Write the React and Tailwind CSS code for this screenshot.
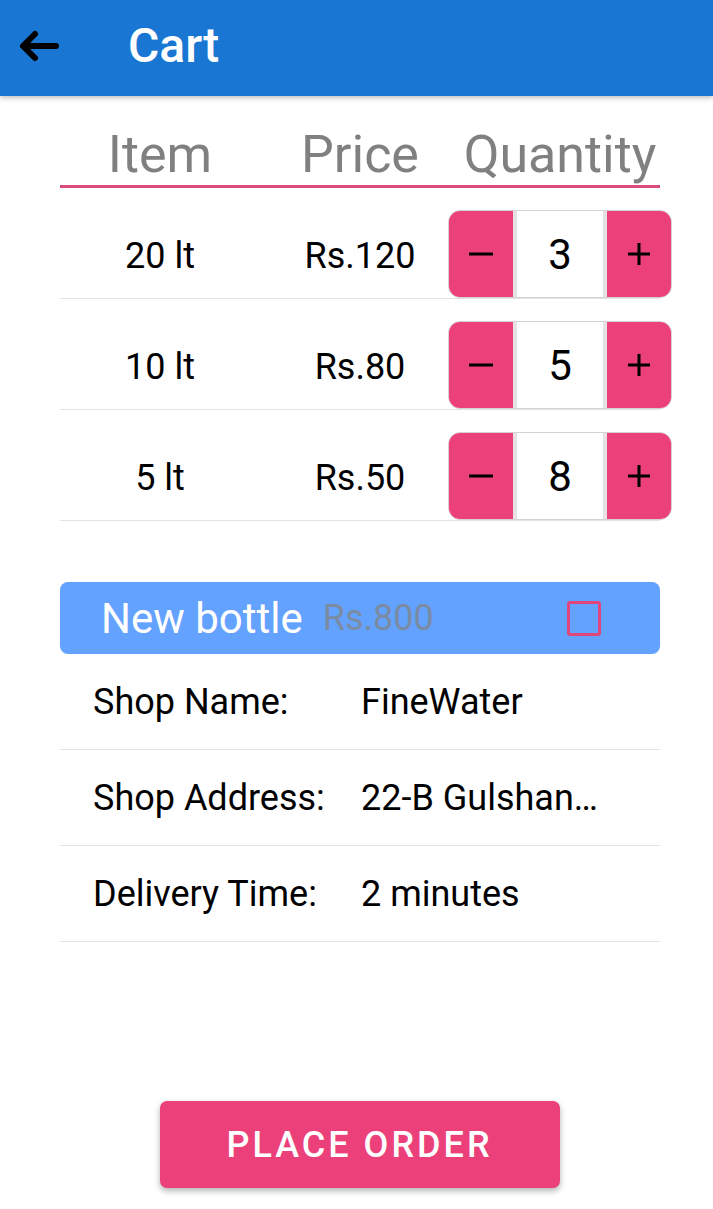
const font = { fontFamily: "Roboto, 'Noto Sans', sans-serif" };

const items = [
  { name: "20 lt", price: "Rs.120", qty: 3 },
  { name: "10 lt", price: "Rs.80", qty: 5 },
  { name: "5 lt", price: "Rs.50", qty: 8 },
];

const details = [
  { label: "Shop Name:", value: "FineWater" },
  { label: "Shop Address:", value: "22-B Gulshan-e-Iqbal, Karachi" },
  { label: "Delivery Time:", value: "2 minutes" },
];

function Stepper({ value }) {
  return (
    <div className="flex h-[88px] shrink-0 gap-[4px] overflow-hidden rounded-[12px] border border-[#d6d2d2] bg-[#e6e2e2]">
      <button className="flex w-[64px] items-center justify-center bg-[#ec407a]">
        <svg width="24" height="4" viewBox="0 0 24 4">
          <rect x="0" y="0.5" width="24" height="3" fill="#000" />
        </svg>
      </button>
      <div className="flex w-[86px] items-center justify-center bg-white text-[42px] text-black">
        {value}
      </div>
      <button className="flex w-[64px] items-center justify-center bg-[#ec407a]">
        <svg width="22" height="22" viewBox="0 0 22 22">
          <rect x="0" y="9.5" width="22" height="3" fill="#000" />
          <rect x="9.5" y="0" width="3" height="22" fill="#000" />
        </svg>
      </button>
    </div>
  );
}

export default function App() {
  return (
    <div className="flex min-h-screen flex-col bg-white" style={font}>
      <header className="relative z-10 flex h-[96px] shrink-0 items-center bg-[#1976d2] pb-[4px] shadow-[0_2px_5px_rgba(0,0,0,0.25)]">
        <button className="ml-[17px] flex h-[40px] w-[44px] items-center justify-center">
          <svg width="42" height="34" viewBox="0 0 42 34" fill="none">
            <path
              d="M38 17H6M17 5L5 17l12 12"
              stroke="#000"
              strokeWidth="6"
              strokeLinecap="round"
              strokeLinejoin="round"
            />
          </svg>
        </button>
        <h1 className="ml-[67px] text-[48px] font-medium text-white">Cart</h1>
      </header>

      <div className="ml-[60px] w-[600px]">
        <div className="mt-[28px] grid grid-cols-3 border-b-[3px] border-[#db4c7e] text-center text-[52px] leading-[61px] text-[#808080]">
          <div>Item</div>
          <div>Price</div>
          <div>Quantity</div>
        </div>

        {items.map((item) => (
          <div
            key={item.name}
            className="grid grid-cols-3 items-center border-b border-[#e3e3e3] pt-[22px] text-center text-[36px] text-black"
          >
            <div className="pt-[4px]">{item.name}</div>
            <div className="pt-[4px]">{item.price}</div>
            <div className="flex justify-center">
              <Stepper value={item.qty} />
            </div>
          </div>
        ))}

        <div className="mt-[61px] flex h-[72px] items-center rounded-[8px] bg-[#64a2ff] pl-[41px] pr-[59px]">
          <span className="text-[42px] text-white">New bottle</span>
          <span className="ml-[20px] text-[36px] text-[#7b8ba1]">Rs.800</span>
          <span className="ml-auto h-[35px] w-[34px] rounded-[3px] border-[3px] border-[#e0457b]" />
        </div>

        {details.map((d) => (
          <div
            key={d.label}
            className="flex h-[96px] items-center border-b border-[#e3e3e3] pl-[33px] text-[36px] text-black"
          >
            <span className="w-[268px] shrink-0">{d.label}</span>
            <span className="w-[244px] truncate">{d.value}</span>
          </div>
        ))}
      </div>

      <div className="mt-auto flex justify-center pb-[21px] pl-[6px] pt-[40px]">
        <button className="h-[87px] w-[400px] rounded-[7px] bg-[#ec407a] text-[36px] font-medium tracking-[3px] text-white shadow-[0_3px_6px_rgba(0,0,0,0.3)]">
          PLACE ORDER
        </button>
      </div>
    </div>
  );
}
